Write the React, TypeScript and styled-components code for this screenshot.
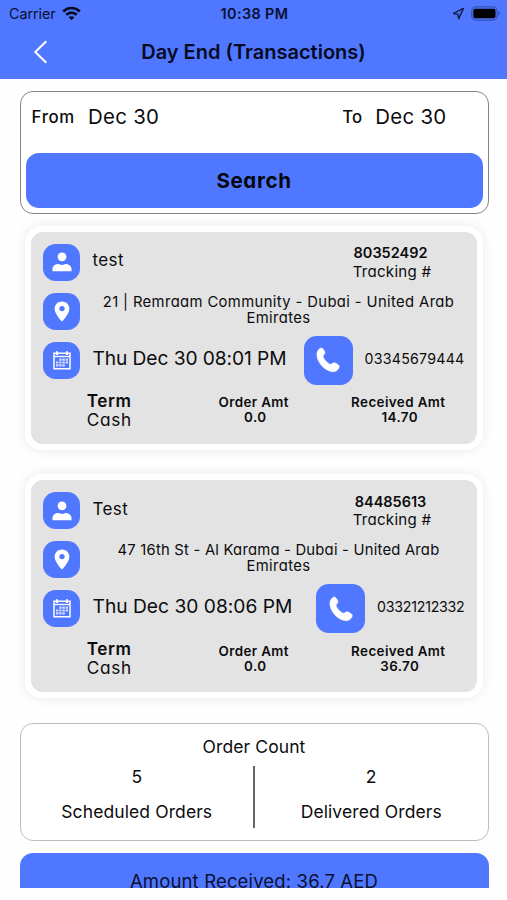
import React from "react";
import styled, { createGlobalStyle } from "styled-components";

const BLUE = "#5077ff";

const GlobalStyle = createGlobalStyle`
  * { box-sizing: border-box; }
  body {
    margin: 0;
    background: #fff;
    color: #0c0c0e;
    font-family: Inter, "Liberation Sans", sans-serif;
    -webkit-font-smoothing: antialiased;
  }
`;

const Screen = styled.div`
  width: 507px;
  height: 900px;
  overflow: hidden;
  background: #fefefe;
`;

const Header = styled.header`
  height: 79.3px;
  background: ${BLUE};
`;

const StatusBar = styled.div`
  height: 27px;
  padding: 0 7px 0 9px;
  display: grid;
  grid-template-columns: 1fr auto 1fr;
  align-items: center;
  font-size: 14.4px;
  color: #0b1030;
`;

const Carrier = styled.div`
  display: flex;
  align-items: center;
  gap: 6px;
  letter-spacing: -0.08px;
`;

const Clock = styled.div`
  font-weight: 600;
  letter-spacing: 0.4px;
`;

const StatusIcons = styled.div`
  display: flex;
  justify-content: flex-end;
  align-items: center;
  gap: 6px;
`;

const NavBar = styled.div`
  height: 50px;
  padding: 0 33px;
  display: grid;
  grid-template-columns: 40px 1fr 40px;
  align-items: center;
`;

const Title = styled.h1`
  margin: 0;
  text-align: center;
  font-size: 20px;
  font-weight: 600;
  letter-spacing: 0;
  color: #060b22;
`;

const Content = styled.main`
  height: 808.4px;
  padding: 12px 18.5px 0 19.5px;
  overflow: hidden;
`;

const Geometric = styled.div`
  font-feature-settings: "cv11";
`;

const SearchPanel = styled.section`
  height: 122.5px;
  border: 1.5px solid #858585;
  border-radius: 13px;
  padding: 0 5px 5px;
  display: flex;
  flex-direction: column;
  background: #fff;
`;

const DateRange = styled.div`
  height: 61px;
  padding: 0 36px 12px 6px;
  display: flex;
  justify-content: space-between;
  align-items: center;
`;

const DateField = styled.div`
  display: flex;
  align-items: center;
  gap: 13px;
`;

const FieldLabel = styled.span<{ $tracking: number }>`
  font-size: 16.8px;
  font-weight: 500;
  letter-spacing: ${(p) => p.$tracking}px;
`;

const FieldValue = styled.span`
  font-size: 20.4px;
  letter-spacing: 0.3px;
`;

const SearchButton = styled.button`
  flex: 0 0 55px;
  border: 0;
  border-radius: 13px;
  background: ${BLUE};
  color: #05070f;
  font: 700 20.6px Inter, sans-serif;
  font-feature-settings: "cv11";
  letter-spacing: 0.6px;
`;

const Card = styled.article`
  margin: 12px 6px 0 5.5px;
  height: 224.3px;
  border: 6.3px solid #fff;
  border-radius: 16px;
  background: #fff;
  box-shadow: 0 0 12px rgba(0, 0, 0, 0.09);

  & + & {
    margin-top: 24px;
  }
`;

const CardBody = styled.div`
  height: 100%;
  padding: 12px 12px 0;
  border-radius: 12px;
  background: #e3e3e3;
`;

const Row = styled.div`
  height: 49px;
  display: grid;
  grid-template-columns: 37px 1fr auto;
  column-gap: 12.5px;
  align-items: start;
`;

const Tile = styled.div<{ $size: number }>`
  width: ${(p) => p.$size}px;
  height: ${(p) => p.$size}px;
  border-radius: 12.5px;
  background: ${BLUE};
  display: flex;
  align-items: center;
  justify-content: center;
`;

const CustomerName = styled.span`
  padding-top: 5.5px;
  font-size: 17px;
  line-height: 22px;
  letter-spacing: 0.4px;
`;

const Tracking = styled.div`
  width: 145px;
  padding-top: 0.5px;
  text-align: center;
  font-size: 15.1px;
  line-height: 18.6px;
  letter-spacing: 0.25px;

  strong {
    display: block;
    margin-left: -3px;
    font-size: 14.5px;
    font-weight: 600;
    letter-spacing: -0.02px;
  }
`;

const Address = styled.p`
  margin: 0;
  padding-top: 1px;
  grid-column: span 2;
  text-align: center;
  font-size: 14.8px;
  line-height: 16.2px;
`;

const AddressLine = styled.span<{ $tracking: number }>`
  display: block;
  white-space: nowrap;
  letter-spacing: ${(p) => p.$tracking}px;
`;

const ScheduleLine = styled.div`
  grid-column: span 2;
  height: 37px;
  display: flex;
  align-items: center;
  white-space: nowrap;
`;

const DateTime = styled.span<{ $tracking: number }>`
  flex: 1;
  padding-bottom: 5px;
  font-size: 19.2px;
  letter-spacing: ${(p) => p.$tracking}px;
`;

const Phone = styled.span<{ $tracking: number }>`
  padding: 0 0 4px 12px;
  font-size: 14.2px;
  letter-spacing: ${(p) => p.$tracking}px;
`;

const Totals = styled.div`
  margin: 0 -6px;
  display: grid;
  grid-template-columns: repeat(3, 1fr);
  justify-items: center;
`;

const Term = styled.div`
  font-size: 17.2px;
  line-height: 19px;
  letter-spacing: 0.65px;

  strong {
    display: block;
    font-weight: 600;
    letter-spacing: 0.55px;
  }
`;

const Amount = styled.div`
  padding: 4.5px 0 0;
  text-align: center;
  font-size: 13.4px;
  font-weight: 580;
  line-height: 15px;
  letter-spacing: 0.4px;

  span {
    display: block;
  }

  span + span {
    padding-left: 3px;
  }
`;

const OrderPanel = styled.section`
  height: 118px;
  margin-top: 24.3px;
  padding-top: 11px;
  border: 1.8px solid #bdbdbd;
  border-radius: 13px;
  background: #fff;
  font-size: 17.5px;
  letter-spacing: 0.1px;
`;

const OrderTitle = styled.div`
  line-height: 24px;
  text-align: center;
`;

const OrderColumns = styled.div`
  display: grid;
  grid-template-columns: 1fr 2px 1fr;
  margin-top: 7px;
`;

const Divider = styled.div`
  height: 62px;
  background: #666;
`;

const OrderStat = styled.div`
  text-align: center;
  line-height: 22px;

  span {
    display: block;
  }
  span + span {
    margin-top: 13px;
  }
`;

const AmountBar = styled.div`
  height: 55px;
  margin-top: 12.3px;
  border-radius: 13px 13px 0 0;
  background: ${BLUE};
  color: #0a1230;
  text-align: center;
  font-size: 18.5px;
  line-height: 56px;
  letter-spacing: 0.15px;
`;

const WifiIcon = () => (
  <svg width="19" height="15" viewBox="0 0 19 15" fill="none" stroke="#080c20" strokeWidth="2.7">
    <path d="M1.2 5.5C5.9.8 13.1.8 17.8 5.5" />
    <path d="M4.3 8.8c3-3 7.4-3 10.4 0" />
    <path d="M9.5 14.2 6.6 11.3c1.6-1.5 4.2-1.5 5.8 0z" fill="#080c20" stroke="none" />
  </svg>
);

const LocationIcon = () => (
  <svg width="13" height="13" viewBox="0 0 13 13" fill="none" stroke="#111a45" strokeWidth="1.4" strokeLinejoin="round">
    <path d="M11.4 1.4 1.5 6.5l4.4.7.8 4.5z" />
  </svg>
);

const BatteryIcon = () => (
  <svg width="29" height="15" viewBox="0 0 29 15">
    <rect x="0.7" y="0.9" width="25.4" height="13.2" rx="4" fill="none" stroke="#3450b8" strokeWidth="1.2" />
    <rect x="2.3" y="2.7" width="22.2" height="9.6" rx="2" fill="#000" />
    <path d="M27.3 5.3c2 .7 2 3.7 0 4.4z" fill="#3450b8" />
  </svg>
);

const BackIcon = () => (
  <svg width="16" height="24" viewBox="0 0 16 24" fill="none" stroke="#fff" strokeWidth="2">
    <path d="M13.3 1.3 2.3 12l11 10.7" />
  </svg>
);

const PersonIcon = () => (
  <svg width="20" height="20" viewBox="0 0 20 20" fill="#fff">
    <circle cx="10" cy="4.8" r="4.4" />
    <path d="M.5 19.2v-1.900c0-3 2.600-5.200 5.800-5.200 1.300 0 1.900 1 3.700 1s2.400-1 3.700-1c3.200 0 5.800 2.200 5.800 5.200v1.900z" />
  </svg>
);

const PinIcon = () => (
  <svg width="16" height="21" viewBox="0 0 16 21">
    <path
      d="M8 .4C3.8.4.6 3.6.6 7.7.6 12.9 8 20.6 8 20.6s7.4-7.7 7.4-12.9C15.4 3.6 12.2.4 8 .4zm0 4.5a2.7 2.7 0 1 1 0 5.4 2.7 2.7 0 0 1 0-5.4z"
      fill="#fff"
      fillRule="evenodd"
    />
  </svg>
);

const CalendarIcon = () => (
  <svg width="18" height="19" viewBox="0 0 18 19" fill="none" stroke="#fff">
    <path d="M1 2.2h16v15.6H1z" strokeWidth="1.5" />
    <path d="M1 5.5h16" strokeWidth="1.4" />
    <path d="M4 .3v3.7M14 .3v3.7" strokeWidth="2" />
    <path d="M6.2 8.6h8.9M3 11.5h12.1M3 14.4h8.900" strokeWidth="2.2" strokeDasharray="2.4 0.8" strokeOpacity="0.75" />
  </svg>
);

const PhoneIcon = () => (
  <svg width="24" height="26" viewBox="0 0 24 26" fill="#fff" stroke="#fff" strokeWidth="0.6" strokeLinejoin="round">
    <path d="M5.6 1C6.8 1 8.9 4.6 9 5.7 9.1 7 7 8 7.1 9.4c.3 2.8 4.6 7.2 7.4 7.8 1.3.2 2.4-1.7 3.7-1.5 1.2.2 4.8 2.2 5 3.3.3 2.7-2.7 5.5-5.4 5.7C9.5 25 .9 15.5.9 7.3 1 4.5 3.1 1 5.6 1z" />
  </svg>
);

interface Delivery {
  name: string;
  tracking: string;
  address: string;
  addressTracking: number;
  date: string;
  dateTracking: number;
  phone: string;
  phoneTracking: number;
  received: string;
}

const deliveries: Delivery[] = [
  {
    name: "test",
    tracking: "80352492",
    address: "21 | Remraam Community - Dubai - United Arab",
    addressTracking: 0.38,
    date: "Thu Dec 30 08:01 PM",
    dateTracking: -0.09,
    phone: "03345679444",
    phoneTracking: 0.24,
    received: "14.70",
  },
  {
    name: "Test",
    tracking: "84485613",
    address: "47 16th St - Al Karama - Dubai - United Arab",
    addressTracking: 0.22,
    date: "Thu Dec 30 08:06 PM",
    dateTracking: 0.01,
    phone: "03321212332",
    phoneTracking: -0.25,
    received: "36.70",
  },
];

const DeliveryCard = ({ item }: { item: Delivery }) => (
  <Card>
    <CardBody>
      <Row>
        <Tile $size={37}><PersonIcon /></Tile>
        <CustomerName>{item.name}</CustomerName>
        <Tracking>
          <strong>{item.tracking}</strong>
          Tracking #
        </Tracking>
      </Row>
      <Row>
        <Tile $size={37}><PinIcon /></Tile>
        <Address>
          <AddressLine $tracking={item.addressTracking}>{item.address}</AddressLine>
          <AddressLine $tracking={0.4}>Emirates</AddressLine>
        </Address>
      </Row>
      <Row>
        <Tile $size={37}><CalendarIcon /></Tile>
        <ScheduleLine>
          <DateTime $tracking={item.dateTracking}>{item.date}</DateTime>
          <Tile $size={49}><PhoneIcon /></Tile>
          <Phone $tracking={item.phoneTracking}>{item.phone}</Phone>
        </ScheduleLine>
      </Row>
      <Totals>
        <Term>
          <strong>Term</strong>
          Cash
        </Term>
        <Amount>
          <span>Order Amt</span>
          <span>0.0</span>
        </Amount>
        <Amount>
          <span>Received Amt</span>
          <span>{item.received}</span>
        </Amount>
      </Totals>
    </CardBody>
  </Card>
);

export default function App() {
  return (
    <Screen>
      <GlobalStyle />
      <Header>
        <StatusBar>
          <Carrier>Carrier <WifiIcon /></Carrier>
          <Clock>10:38 PM</Clock>
          <StatusIcons><LocationIcon /><BatteryIcon /></StatusIcons>
        </StatusBar>
        <NavBar>
          <BackIcon />
          <Title>Day End (Transactions)</Title>
        </NavBar>
      </Header>
      <Content>
        <Geometric>
          <SearchPanel>
            <DateRange>
              <DateField>
                <FieldLabel $tracking={0.7}>From</FieldLabel>
                <FieldValue>Dec 30</FieldValue>
              </DateField>
              <DateField>
                <FieldLabel $tracking={0.1}>To</FieldLabel>
                <FieldValue>Dec 30</FieldValue>
              </DateField>
            </DateRange>
            <SearchButton>Search</SearchButton>
          </SearchPanel>
          {deliveries.map((item) => (
            <DeliveryCard key={item.tracking} item={item} />
          ))}
        </Geometric>
        <OrderPanel>
          <OrderTitle>Order Count</OrderTitle>
          <OrderColumns>
            <OrderStat><span>5</span><span>Scheduled Orders</span></OrderStat>
            <Divider />
            <OrderStat><span>2</span><span>Delivered Orders</span></OrderStat>
          </OrderColumns>
        </OrderPanel>
        <AmountBar>Amount Received: 36.7 AED</AmountBar>
      </Content>
    </Screen>
  );
}
